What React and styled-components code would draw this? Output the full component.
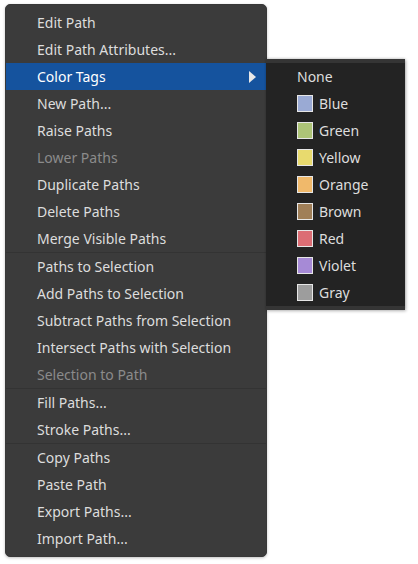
import React from "react";
import styled, { createGlobalStyle } from "styled-components";

const Global = createGlobalStyle`
  html, body { margin: 0; padding: 0; background: #ffffff; }
  body { font-family: "Noto Sans", "DejaVu Sans", sans-serif; }
`;

const Stage = styled.div`
  position: relative;
  padding: 4px 0 0 5px;
  width: 418px;
  height: 564px;
  box-sizing: border-box;
`;

const Menu = styled.div`
  position: relative;
  width: 262px;
  box-sizing: border-box;
  background: #3b3b3b;
  border: 1px solid #383838;
  border-radius: 5px;
  padding: 4px 0;
  display: flex;
  flex-direction: column;
  box-shadow: 0 1px 3px rgba(0, 0, 0, 0.25);
`;

const Item = styled.div`
  height: 27px;
  display: flex;
  align-items: center;
  padding-left: 31px;
  padding-right: 10px;
  font-size: 14px;
  color: ${(p) => (p.$disabled ? "#8b8b8b" : p.$active ? "#ffffff" : "#dddddd")};
  background: ${(p) => (p.$active ? "#15539e" : "transparent")};
  justify-content: space-between;
  white-space: nowrap;
`;

const Separator = styled.div`
  height: 1px;
  background: #333333;
`;

const Arrow = styled.svg`
  width: 7px;
  height: 12px;
`;

const Submenu = styled.div`
  position: absolute;
  left: 266px;
  top: 59px;
  width: 139px;
  background: #232323;
  border-top: 4px solid #353535;
  border-bottom: 4px solid #353535;
  display: flex;
  flex-direction: column;
  box-shadow: 1px 1px 3px rgba(0, 0, 0, 0.3), 0 -1px 2px rgba(0, 0, 0, 0.12);
`;

const SubItem = styled.div`
  height: 27px;
  display: flex;
  align-items: center;
  gap: 6px;
  padding-left: 31px;
  font-size: 14px;
  color: #dddddd;
  white-space: nowrap;
`;

const Swatch = styled.span`
  width: 16px;
  height: 17px;
  box-sizing: border-box;
  border: 1px solid #e6e6e6;
  background: ${(p) => p.$color};
  flex: none;
`;

const groups = [
  [
    { label: "Edit Path" },
    { label: "Edit Path Attributes..." },
    { label: "Color Tags", active: true, sub: true },
    { label: "New Path..." },
    { label: "Raise Paths" },
    { label: "Lower Paths", disabled: true },
    { label: "Duplicate Paths" },
    { label: "Delete Paths" },
    { label: "Merge Visible Paths" },
  ],
  [
    { label: "Paths to Selection" },
    { label: "Add Paths to Selection" },
    { label: "Subtract Paths from Selection" },
    { label: "Intersect Paths with Selection" },
    { label: "Selection to Path", disabled: true },
  ],
  [{ label: "Fill Paths..." }, { label: "Stroke Paths..." }],
  [
    { label: "Copy Paths" },
    { label: "Paste Path" },
    { label: "Export Paths..." },
    { label: "Import Path..." },
  ],
];

const tags = [
  { label: "Blue", color: "#9aaad4" },
  { label: "Green", color: "#adc477" },
  { label: "Yellow", color: "#e8da6e" },
  { label: "Orange", color: "#f0b96b" },
  { label: "Brown", color: "#a07f58" },
  { label: "Red", color: "#dc6d74" },
  { label: "Violet", color: "#a68ad6" },
  { label: "Gray", color: "#9d9d9d" },
];

export default function App() {
  return (
    <>
      <Global />
      <Stage>
        <Menu>
          {groups.map((g, gi) => (
            <React.Fragment key={gi}>
              {gi > 0 && <Separator />}
              {g.map((it) => (
                <Item key={it.label} $active={it.active} $disabled={it.disabled}>
                  <span>{it.label}</span>
                  {it.sub && (
                    <Arrow viewBox="0 0 7 12">
                      <path d="M0 0 L7 6 L0 12 Z" fill="#e8e8e8" />
                    </Arrow>
                  )}
                </Item>
              ))}
            </React.Fragment>
          ))}
        </Menu>
        <Submenu>
          <SubItem>None</SubItem>
          {tags.map((t) => (
            <SubItem key={t.label}>
              <Swatch $color={t.color} />
              <span>{t.label}</span>
            </SubItem>
          ))}
        </Submenu>
      </Stage>
    </>
  );
}
